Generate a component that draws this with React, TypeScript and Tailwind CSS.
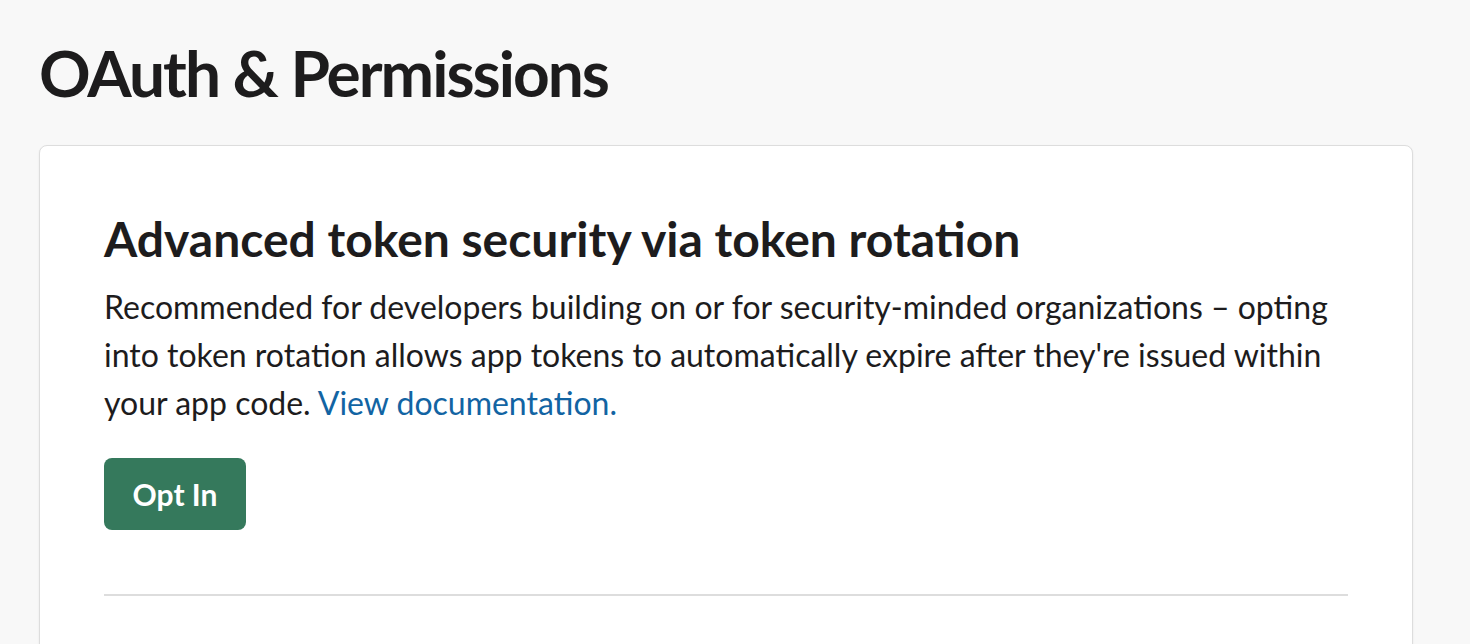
export default function App() {
  return (
    <div className="min-h-screen bg-[#f8f8f8] px-[39px] pt-[34px] font-['Lato',sans-serif] text-[#1d1c1d]">
      {/* Page title */}
      <h1 className="text-[64px] font-bold leading-[77px] tracking-[-2px]">OAuth &amp; Permissions</h1>

      {/* Token rotation card */}
      <div className="mt-[34px] w-[1374px] rounded-lg border border-[#dddddd] bg-white px-[64px] pt-[64px] pb-[40px] shadow-[0_1px_2px_rgba(0,0,0,0.08)]">
        <h2 className="text-[48px] font-bold leading-[58px]">
          Advanced token security via token rotation
        </h2>
        <p className="mt-[15px] text-[32px] leading-[48px]">
          Recommended for developers building on or for security-minded organizations – opting
          into token rotation allows app tokens to automatically expire after they're issued within
          your app code. <a href="#" className="text-[#1264a3]">View documentation.</a>
        </p>
        <button
          type="button"
          className="mt-[31px] h-[72px] w-[142px] rounded-lg bg-[#35795c] text-[30px] font-bold text-white"
        >
          Opt In
        </button>
        <hr className="mt-[64px] border-t-2 border-[#dddddd]" />
        <div className="h-[60px]" />
      </div>
    </div>
  );
}
